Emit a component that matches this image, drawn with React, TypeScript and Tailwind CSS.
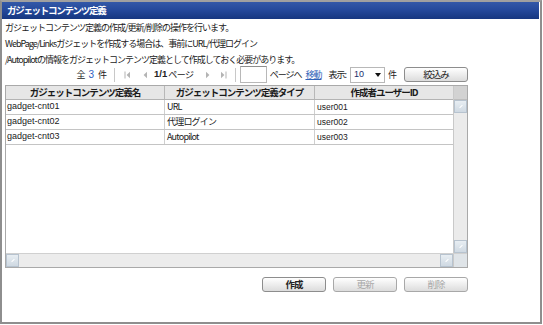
import React from "react"

const jp = "font-['Noto_Sans_CJK_JP','Liberation_Sans',sans-serif]"
const lat = "font-['Liberation_Sans','Noto_Sans_CJK_JP',sans-serif]"

const rows = [
  { name: "gadget-cnt01", type: "URL", user: "user001" },
  { name: "gadget-cnt02", type: "代理ログイン", user: "user002" },
  { name: "gadget-cnt03", type: "Autopilot", user: "user003" },
]

function Edge({ dir }: { dir: "first" | "prev" | "next" | "last" }) {
  const flip = dir === "next" || dir === "last"
  return (
    <svg width="7" height="8" viewBox="0 0 7 8" className={flip ? "-scale-x-100" : ""}>
      {(dir === "first" || dir === "last") && <rect x="0.5" y="0.5" width="1" height="7" fill="#b4b4b4" />}
      <path d="M6 0.8 L2.6 4 L6 7.2 Z" fill="#b4b4b4" />
    </svg>
  )
}

function Sep() {
  return <span className="w-px h-[14px] bg-[#c8c8c8]" />
}

function Btn({ label, bold, disabled, w = "w-[64px]" }: { label: string; bold?: boolean; disabled?: boolean; w?: string }) {
  return (
    <button
      className={`${w} h-[15px] rounded-[3px] border border-[#8d8d8d] bg-gradient-to-b from-[#ffffff] to-[#dcdcdc] flex items-center justify-center text-[9.5px] tracking-[-1px] leading-none ${jp} ${
        bold ? "font-bold text-[#222]" : ""
      } ${disabled ? "text-[#a8a8a8] border-[#a8a8a8]" : "text-[#222]"}`}
    >
      {label}
    </button>
  )
}

function Thumb({ className = "" }: { className?: string }) {
  return (
    <div className={`w-[13px] h-[13px] border border-[#b7c3cf] bg-gradient-to-b from-[#e8eef3] to-[#cfd9e2] flex items-center justify-center ${className}`}>
      <span className="w-[4px] h-px bg-white rotate-[-45deg]" />
    </div>
  )
}

export default function App() {
  return (
    <div className="w-[543px] h-[325px] bg-white overflow-hidden">
      <div className="w-[542px] h-[324px] border-2 border-[#8e8e8e] border-t-[#a0a0a0] flex flex-col">
        <div className={`h-[17px] mr-[1px] bg-gradient-to-b from-[#3358a8] via-[#24489a] to-[#173780] text-white font-bold text-[9.5px] tracking-[-1.3px] leading-[17px] pl-[5px] ${jp}`}>
          ガジェットコンテンツ定義
        </div>

        <div className={`pl-[3px] pt-[1px] text-[9px] tracking-[-1px] leading-[16px] text-[#1a1a1a] ${jp}`}>
          <p>ガジェットコンテンツ定義の作成/更新/削除の操作を行います。</p>
          <p>WebPage/Linksガジェットを作成する場合は、事前にURL/代理ログイン</p>
          <p>/Autopilotの情報をガジェットコンテンツ定義として作成しておく必要があります。</p>
        </div>

        <div className="w-[466px] pl-[3px] flex flex-col">
          <div className={`-mt-[3px] h-[19px] flex items-center justify-end text-[9px] tracking-[-1px] text-[#222] ${jp}`}>
            <span className="mr-[8px] flex items-center gap-[4px]">
              <span>全</span>
              <span className={`text-[#3060c0] text-[10px] ${lat} tracking-normal`}>3</span>
              <span>件</span>
            </span>
            <Sep />
            <span className="ml-[9px]"><Edge dir="first" /></span>
            <span className="ml-[10px]"><Edge dir="prev" /></span>
            <span className="ml-[6px] text-[#222] flex items-center">
              <span className={`${lat} tracking-normal text-[9.5px] font-bold mr-[1px]`}>1/1</span>
              <span className="tracking-[-0.5px]">ページ</span>
            </span>
            <span className="ml-[11px]"><Edge dir="next" /></span>
            <span className="ml-[8px] mr-[8px]"><Edge dir="last" /></span>
            <Sep />
            <span className="ml-[4px] w-[27px] h-[17px] border border-[#b8b8b8] border-t-[#8e8e8e] bg-white" />
            <span className="ml-[3px]">ページへ</span>
            <span className="ml-[4px] text-[#2f62b8] underline">移動</span>
            <span className="ml-[4px]"><Sep /></span>
            <span className="ml-[3px]">表示:</span>
            <span className="ml-[4px] w-[35px] h-[16px] border border-[#b8b8b8] bg-white flex items-center justify-between px-[3px]">
              <span className={`${lat} text-[9px] tracking-normal text-[#1b2e6b]`}>10</span>
              <svg width="6" height="4" viewBox="0 0 6 4"><path d="M0 0 H6 L3 4 Z" fill="#111" /></svg>
            </span>
            <span className="ml-[3px] mr-[8px]">件</span>
            <Btn label="絞込み" />
          </div>

          <div className="mt-[1px] h-[183px] border border-[#a9a9a9] flex flex-col">
            <div className="flex-1 flex min-h-0">
              <div className="flex-1 flex flex-col">
                <div className={`h-[14px] flex bg-[#e6e6e6] border-b border-[#b3b3b3] text-[9.5px] font-bold tracking-[-1px] text-[#1a1a1a] ${jp}`}>
                  <div className="w-[159px] border-r border-[#b8b8b8] flex items-center justify-center">ガジェットコンテンツ定義名</div>
                  <div className="w-[150px] border-r border-[#b8b8b8] flex items-center justify-center">ガジェットコンテンツ定義タイプ</div>
                  <div className="flex-1 flex items-center justify-center">作成者ユーザーID</div>
                </div>
                {rows.map((r) => (
                  <div key={r.name} className="h-[15px] flex border-b border-[#c4c4c4] text-[#1a1a1a]">
                    <div className={`w-[159px] border-r border-[#cfcfcf] pl-[1px] flex items-center text-[9px] ${lat}`}>{r.name}</div>
                    <div className={`w-[150px] border-r border-[#cfcfcf] pl-[2px] flex items-center text-[9px] tracking-[-0.8px] ${jp}`}>{r.type}</div>
                    <div className={`flex-1 pl-[2px] flex items-center text-[8.5px] ${lat}`}>{r.user}</div>
                  </div>
                ))}
              </div>
              <div className="w-[14px] bg-[#ebebeb] border-l border-[#c9c9c9] flex flex-col">
                <div className="h-[14px] bg-[#d2d2d2] border-b border-[#bdbdbd]" />
                <Thumb />
                <div className="flex-1" />
                <Thumb />
              </div>
            </div>
            <div className="h-[14px] flex border-t border-[#d0d0d0]">
              <div className="flex-1 bg-[#ececec] flex justify-between">
                <Thumb />
                <Thumb />
              </div>
              <div className="w-[14px] bg-[#dfe4e8] border-l border-[#c9c9c9]" />
            </div>
          </div>

          <div className="mt-[9px] flex justify-end gap-[7px]">
            <Btn label="作成" bold />
            <Btn label="更新" disabled />
            <Btn label="削除" disabled />
          </div>
        </div>
      </div>
    </div>
  )
}
